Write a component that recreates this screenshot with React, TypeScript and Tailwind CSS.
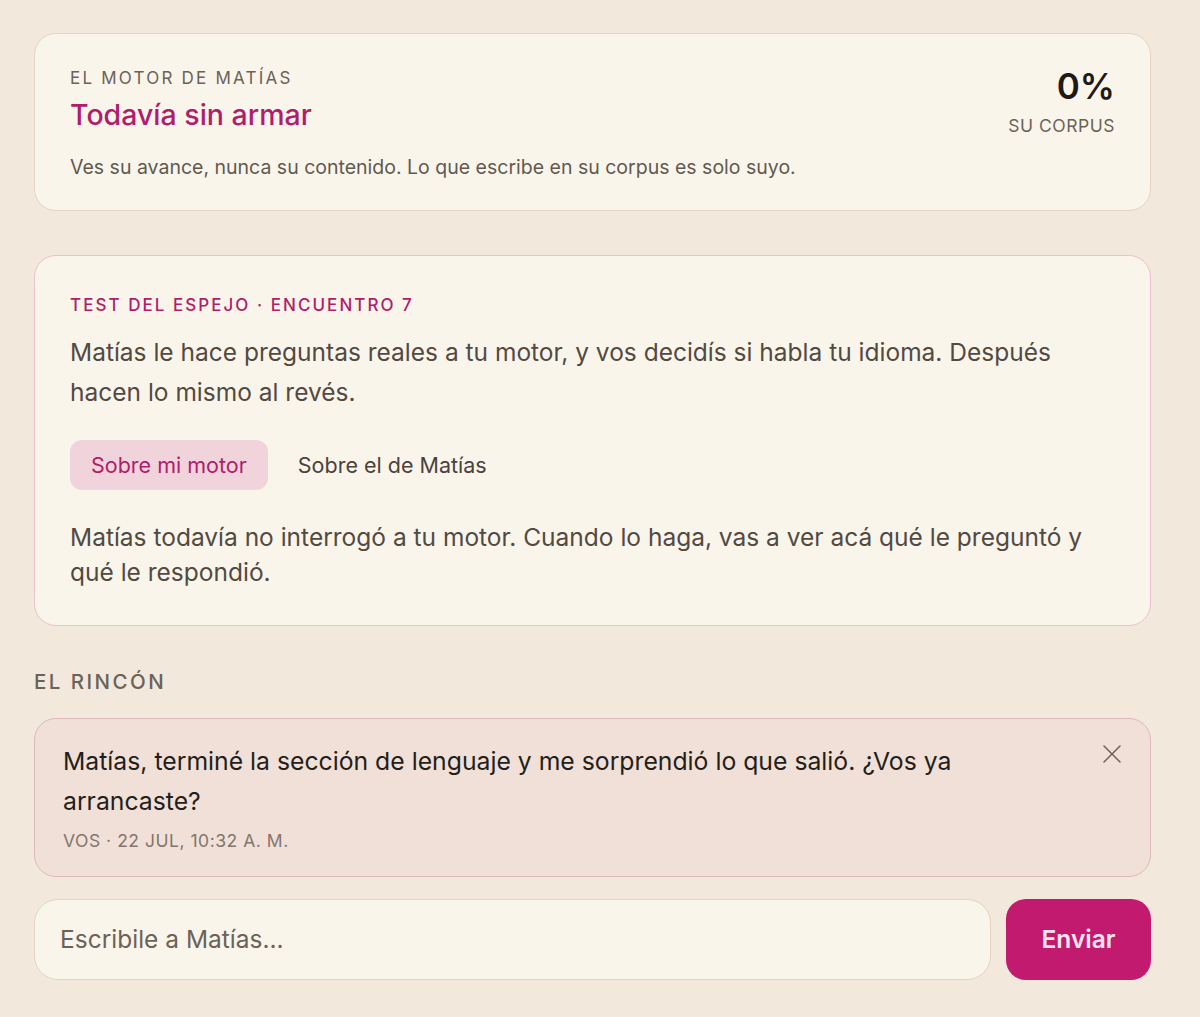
import { X } from "lucide-react";

const font = { fontFamily: "Inter, 'Noto Sans', sans-serif" };

export default function App() {
  return (
    <div className="min-h-[1017px] bg-[#f2e8dc] pt-[33px] pb-8 text-[#2a241f]" style={font}>
      <div className="ml-[34px] w-[1117px]">
        {/* progress of the other engine */}
        <div className="flex items-start justify-between rounded-[22px] border border-[#e2d5c2] bg-[#faf5eb] px-[35px] pt-[32px] pb-[29px]">
          <div>
            <p className="text-[17px] uppercase leading-[24px] tracking-[0.13em] text-[#6b6258]">
              El motor de Matías
            </p>
            <h2 className="mt-[7px] text-[28.5px] font-medium leading-[36px] text-[#b01d6c]">
              Todavía sin armar
            </h2>
            <p className="mt-[20px] text-[19.5px] leading-[28px] text-[#615950]">
              Ves su avance, nunca su contenido. Lo que escribe en su corpus es solo suyo.
            </p>
          </div>
          <div className="pt-[3px] text-right">
            <p className="text-[35px] font-semibold leading-none text-[#1f1a16]">0%</p>
            <p className="mt-[9px] text-[17.5px] uppercase tracking-[0.03em] text-[#6b6258]">
              Su corpus
            </p>
          </div>
        </div>

        {/* mirror test */}
        <div className="mt-[44px] rounded-[22px] border border-[#ecc0d0] bg-[#faf5eb] px-[35px] pt-[37px] pb-[35px]">
          <p className="text-[17px] font-medium uppercase tracking-[0.12em] text-[#b01d6c]">
            Test del espejo · Encuentro 7
          </p>
          <p className="mt-[13px] text-[24.5px] leading-[40px] text-[#524a42]">
            Matías le hace preguntas reales a tu motor, y vos decidís si habla tu idioma. Después
            hacen lo mismo al revés.
          </p>
          <div className="mt-[28px] flex items-center gap-[9px]">
            <button className="rounded-[12px] bg-[#f1d3dc] px-[21px] py-[11px] text-[21.5px] leading-[28px] text-[#b01d6c]">
              Sobre mi motor
            </button>
            <button className="rounded-[12px] px-[21px] py-[11px] text-[21.5px] leading-[28px] text-[#4a423b]">
              Sobre el de Matías
            </button>
          </div>
          <p className="mt-[30px] text-[24.5px] leading-[35px] text-[#524a42]">
            Matías todavía no interrogó a tu motor. Cuando lo haga, vas a ver acá qué le preguntó
            y qué le respondió.
          </p>
        </div>

        {/* corner */}
        <p className="mt-[41px] text-[20.5px] font-medium uppercase tracking-[0.12em] text-[#6b6258]">
          El rincón
        </p>
        <div className="mt-[21px] flex items-start justify-between rounded-[22px] border border-[#dfb7bd] bg-[#f1e0d8] pl-[28px] pr-[22px] pt-[22px] pb-[21px]">
          <div>
            <p className="text-[24.75px] leading-[40px] text-[#231e1a]">
              Matías, terminé la sección de lenguaje y me sorprendió lo que salió. ¿Vos ya
              <br />
              arrancaste?
            </p>
            <p className="mt-[7px] text-[17.5px] uppercase tracking-[0.03em] text-[#80766c]">
              Vos · 22 jul, 10:32 a. m.
            </p>
          </div>
          <button className="-mt-[3px] text-[#6b6258]">
            <X size={32} strokeWidth={1.1} />
          </button>
        </div>

        {/* compose */}
        <div className="mt-[22px] flex gap-[15px]">
          <div className="flex h-[81px] flex-1 items-center rounded-[24px] border border-[#e2d5c2] bg-[#faf5eb] px-[25px]">
            <span className="text-[24.5px] text-[#6b6258]">Escribile a Matías...</span>
          </div>
          <button className="h-[81px] w-[145px] rounded-[20px] bg-[#c21a6e] text-[24.5px] font-semibold text-[#fde4ee]">
            Enviar
          </button>
        </div>
      </div>
    </div>
  );
}
